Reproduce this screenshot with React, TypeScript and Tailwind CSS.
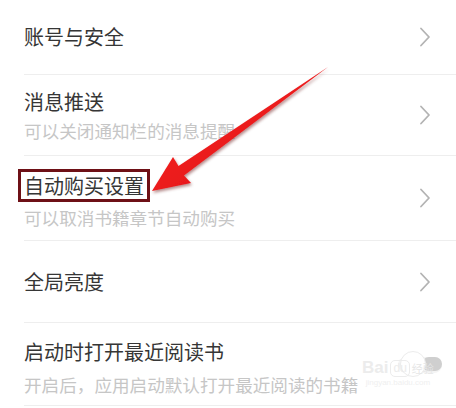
import React from "react";

const Chevron = () => (
  <svg width="12" height="20" viewBox="0 0 12 20" className="shrink-0">
    <path d="M2 1.5 L10 10 L2 18.5" fill="none" stroke="#b3b3b3" strokeWidth="1.8" strokeLinecap="round" strokeLinejoin="round" />
  </svg>
);

export default function App() {
  const font = { fontFamily: '"Noto Sans CJK SC", "Noto Sans", sans-serif' };
  return (
    <div className="relative w-[456px] h-[408px] bg-white overflow-hidden" style={font}>
      {/* Row 1 */}
      <div className="ml-6 h-[75px] border-b border-[#eeeeee] flex items-center justify-between pr-[25px]">
        <span className="text-[20px] leading-[28px] text-[#363636] -mt-[1px]">账号与安全</span>
        <Chevron />
      </div>
      {/* Row 2 */}
      <div className="ml-6 h-[81px] border-b border-[#eeeeee] flex items-center justify-between pr-[25px]">
        <div className="flex flex-col h-full pt-[13px]">
          <span className="text-[20px] leading-[28px] text-[#363636]">消息推送</span>
          <span className="text-[17.6px] leading-[22px] text-[#c6c6c6] mt-[4px]">可以关闭通知栏的消息提醒</span>
        </div>
        <Chevron />
      </div>
      {/* Row 3 */}
      <div className="ml-6 h-[85px] border-b border-[#eeeeee] flex items-center justify-between pr-[25px]">
        <div className="flex flex-col h-full pt-[13px]">
          <span className="self-start -ml-[6px] border-[3px] border-[#6e1016] px-[3px] text-[20px] leading-[27px] text-[#363636]">自动购买设置</span>
          <span className="text-[17.6px] leading-[22px] text-[#c6c6c6] mt-[5px]">可以取消书籍章节自动购买</span>
        </div>
        <Chevron />
      </div>
      {/* Row 4 */}
      <div className="ml-6 h-[82px] border-b border-[#eeeeee] flex items-center justify-between pr-[25px]">
        <span className="text-[20px] leading-[28px] text-[#363636]">全局亮度</span>
        <Chevron />
      </div>
      {/* Row 5 */}
      <div className="ml-6 h-[83px] border-b border-[#eeeeee] flex items-center justify-between pr-[14px]">
        <div className="flex flex-col h-full pt-[15px]">
          <span className="text-[20px] leading-[28px] text-[#363636]">启动时打开最近阅读书</span>
          <span className="text-[17.6px] leading-[22px] text-[#c6c6c6] mt-[8px]">开启后，应用启动默认打开最近阅读的书籍</span>
        </div>
        <div className="relative w-[44px] h-[16px] rounded-full bg-[#f4f4f4] mt-[2px]">
          <div className="absolute right-0 top-0 w-[20px] h-[14px] rounded-full bg-[#cfcfcf]" />
          <div className="absolute left-[2px] -top-[6px] w-[26px] h-[26px] rounded-full bg-white border border-[#ececec]" />
        </div>
      </div>

      {/* watermark */}
      <div className="absolute left-[362px] top-[358px] flex flex-col items-center pointer-events-none">
        <div className="flex items-center gap-[2px]">
          <span className="text-[17px] leading-[20px] text-[#ececec] font-bold" style={{ fontFamily: '"Liberation Sans", sans-serif' }}>Bai</span>
          <span className="text-[12px] leading-[15px] px-[2px] rounded-[5px] border border-[#ececec] text-[#ececec]" style={{ fontFamily: '"Liberation Sans", sans-serif' }}>du</span>
          <span className="text-[11px] leading-[14px] text-[#e6e6e6]">经验</span>
        </div>
        <span className="text-[8px] leading-[10px] text-[#efefef]" style={{ fontFamily: '"Liberation Sans", sans-serif' }}>jingyan.baidu.com</span>
      </div>

      {/* red arrow */}
      <svg className="absolute left-0 top-0 pointer-events-none" width="456" height="408" viewBox="0 0 456 408">
        <defs>
          <filter id="sh" x="-20%" y="-20%" width="140%" height="140%">
            <feDropShadow dx="1" dy="2" stdDeviation="1.5" floodColor="#5a0000" floodOpacity="0.45" />
          </filter>
          <linearGradient id="rg" x1="0" y1="0" x2="1" y2="1">
            <stop offset="0" stopColor="#ff2a2a" />
            <stop offset="1" stopColor="#d80c10" />
          </linearGradient>
        </defs>
        <polygon
          points="152,191 173,157 178.5,166 328,67 184,175.5 191,183"
          fill="url(#rg)"
          filter="url(#sh)"
        />
      </svg>
    </div>
  );
}
